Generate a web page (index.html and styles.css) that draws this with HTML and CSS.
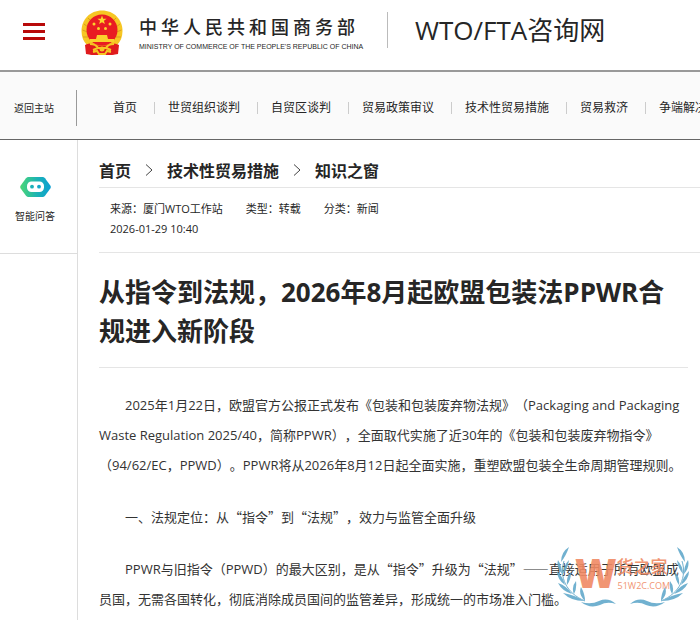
FILE: index.html
```html
<!DOCTYPE html>
<html lang="zh-CN">
<head>
<meta charset="utf-8">
<meta name="viewport" content="width=device-width, initial-scale=1">
<title>WTO/FTA咨询网</title>
<link rel="stylesheet" href="styles.css">
</head>
<body>
<header class="top">
  <button class="menu" type="button" aria-label="菜单"><span></span><span></span><span></span></button>
  <a class="brand" href="#">
    <svg class="emblem" viewBox="0 0 42 45" aria-hidden="true">
      <path d="M6 31 L36 31 L37 43 L30 45 H12 L5 43Z" fill="#e01b1d"/>
      <path d="M21 0.500C9 0.500 0.500 9.500 0.500 21c0 6 2 11 6 14.500h29c4-3.500 6-8.500 6-14.500C41.500 9.500 33 0.500 21 0.500z" fill="#f6c623"/>
      <path d="M3 14l4 3M1.500 20l5 2M2 27l5 0M39 14l-4 3M40.500 20l-5 2M40 27l-5 0M7 8l4 4M35 8l-4 4" stroke="#dc9c1c" fill="none"/>
      <circle cx="21" cy="20" r="15.500" fill="#e91c22"/>
      <path d="M21 5.500l1.200 3.200h3.400l-2.700 2.100 1 3.300L21 12.200l-2.900 1.900 1-3.300-2.700-2.100h3.400z" fill="#fbd82c"/>
      <g fill="#fbd02c"><circle cx="13" cy="14" r="1.500"/><circle cx="29" cy="14" r="1.500"/><circle cx="17.500" cy="18.500" r="1.500"/><circle cx="24.500" cy="18.500" r="1.500"/>
      <path d="M16 25h10l1 4h6v3H9v-3h6z"/></g>
      <path d="M4 35c5-2 10-2 13 1h8c3-3 8-3 13-1l-1 9-6 1H11l-6-1z" fill="#e01b1d"/>
      <path d="M9 34c4 0 7 2 8 4h8c1-2 4-4 8-4M12 42l4-1 2 3h6l2-3 4 1M17 38l-5 2M25 38l5 2" stroke="#f6c623" stroke-width="2" fill="none"/>
      <circle cx="21" cy="39" r="2.500" fill="#f6c623"/>
    </svg>
    <span class="ministry">
      <span class="ministry-cn">中华人民共和国商务部</span>
      <span class="ministry-en">MINISTRY OF COMMERCE OF THE PEOPLE'S REPUBLIC OF CHINA</span>
    </span>
  </a>
  <a class="site" href="#">WTO/FTA咨询网</a>
</header>

<nav class="nav">
  <a class="back" href="#">返回主站</a>
  <ul class="links">
    <li><a href="#">首页</a></li>
    <li><a href="#">世贸组织谈判</a></li>
    <li><a href="#">自贸区谈判</a></li>
    <li><a href="#">贸易政策审议</a></li>
    <li><a href="#">技术性贸易措施</a></li>
    <li><a href="#">贸易救济</a></li>
    <li><a href="#">争端解决</a></li>
  </ul>
</nav>

<div class="page">
  <aside class="side">
    <a class="ask" href="#">
      <svg class="bot" viewBox="0 0 31 20" aria-hidden="true">
        <defs><linearGradient id="g" x1="0" y1="0" x2="1" y2="0"><stop offset="0" stop-color="#4bd676"/><stop offset="0.550" stop-color="#1cb3b4"/><stop offset="1" stop-color="#0b9fd3"/></linearGradient></defs>
        <path d="M8.500 0h14q1.500 0 2.500 1.200l5.300 7.300q1 1.500 0 3L25 18.800Q24 20 22.500 20h-14Q7 20 6 18.800L0.700 11.500q-1-1.500 0-3L6 1.200Q7 0 8.500 0z" fill="url(#g)"/>
        <rect x="7" y="4.500" width="17" height="10.500" rx="4.500" fill="#fff"/>
        <circle cx="12" cy="9.700" r="1.900" fill="#19b0b9"/><circle cx="19" cy="9.700" r="1.900" fill="#11a6c8"/>
      </svg>
      <span>智能问答</span>
    </a>
  </aside>

  <main class="main">
    <nav class="crumbs">
      <a href="#">首页</a>
      <svg viewBox="0 0 8 14" aria-hidden="true"><path d="M1 1.500l6 5.500-6 5.500"/></svg>
      <a href="#">技术性贸易措施</a>
      <svg viewBox="0 0 8 14" aria-hidden="true"><path d="M1 1.500l6 5.500-6 5.500"/></svg>
      <a href="#">知识之窗</a>
    </nav>
    <div class="meta">
      <span>来源：厦门WTO工作站</span>
      <span>类型：转载</span>
      <span>分类：新闻</span>
      <time datetime="2026-01-29T10:40">2026-01-29 10:40</time>
    </div>
    <h1 class="title">从指令到法规，2026年8月起欧盟包装法PPWR合规进入新阶段</h1>
    <article class="body">
      <p>2025年1月22日，欧盟官方公报正式发布《包装和包装废弃物法规》（Packaging and Packaging Waste Regulation 2025/40，简称PPWR），全面取代实施了近30年的《包装和包装废弃物指令》（94/62/EC，PPWD）。PPWR将从2026年8月12日起全面实施，重塑欧盟包装全生命周期管理规则。</p>
      <p>一、法规定位：从<span class="cjk">“指令”</span>到<span class="cjk">“法规”</span>，效力与监管全面升级</p>
      <p>PPWR与旧指令（PPWD）的最大区别，是从<span class="cjk">“指令”</span>升级为<span class="cjk">“法规”——</span>直接适用于所有欧盟成员国，无需各国转化，彻底消除成员国间的监管差异，形成统一的市场准入门槛。</p>
    </article>
    <div class="mark">
      <svg class="laurel" viewBox="0 0 132 62" aria-hidden="true">
        <defs>
          <g id="half">
            <path d="M7 14C2 30 9 46 28 54"/>
            <path class="leaf" d="M12 0Q4 5 4 15Q9 9 12 0zM1 13Q-1 20 5 27Q5 19 1 13zM12 13Q6 19 6 27Q11 21 12 13zM0 24Q0 32 8 38Q6 30 0 24zM14 25Q9 30 10 38Q14 33 14 25zM1 36Q5 44 15 47Q10 39 1 36zM19 34Q14 40 17 47Q20 42 19 34zM6 46Q14 54 27 54Q18 48 6 46zM24 40Q21 47 28 54Q28 47 24 40z"/>
            <path class="leaf" d="M24 55Q34 58 42 54Q51 50 59 57Q50 54 43 58Q33 62 24 55z"/>
          </g>
        </defs>
        <use href="#half"/>
        <use href="#half" transform="translate(132 0) scale(-1 1)"/>
      </svg>
      <span class="mark-w">W</span>
      <span class="mark-text"><b>货之家</b><small>51W2C.COM</small></span>
    </div>
  </main>
</div>
</body>
</html>
```
FILE: styles.css
```css
* { box-sizing: border-box; }
body {
  margin: 0;
  overflow-x: hidden;
  background: #fff;
  color: #262626;
  font-family: "Open Sans", "Noto Sans CJK SC", sans-serif;
  text-spacing-trim: space-all;
}
a { color: inherit; text-decoration: none; }

.top {
  display: flex;
  align-items: center;
  height: 72px;
  padding: 0 0 10px 23px;
  border-bottom: 2px solid #999;
  white-space: nowrap;
}
.menu {
  display: flex;
  flex-direction: column;
  gap: 4px;
  width: 22px;
  padding: 2px 0 0;
  border: 0;
  background: none;
}
.menu span { height: 3px; background: #b80a0a; }
.brand {
  display: flex;
  align-items: center;
  gap: 16px;
  height: 36px;
  margin-left: 36px;
  padding-right: 29px;
  border-right: 1px solid #bbb;
}
.emblem { width: 42px; height: 45px; margin-top: 4px; }
.ministry { display: flex; flex-direction: column; width: 219px; padding-top: 6px; }
.ministry-cn {
  font-size: 18px;
  font-weight: 500;
  line-height: 28px;
  letter-spacing: 4px;
}
.ministry-en {
  font-family: "Liberation Sans", sans-serif;
  font-size: 7px;
  line-height: 12px;
}
.site { margin-left: 27px; font-size: 26px; line-height: 36px; }

.nav {
  display: flex;
  align-items: center;
  height: 68px;
  padding-top: 4px;
  border-bottom: 1px solid #666;
  background: #fafafa;
  white-space: nowrap;
}
.back {
  flex: none;
  width: 77px;
  padding-left: 14px;
  border-right: 1px solid #999;
  font-size: 10px;
  line-height: 36px;
}
.links {
  display: flex;
  margin: 0;
  padding: 0 0 0 36px;
  list-style: none;
  font-size: 12px;
  line-height: 18px;
}
.links li { display: flex; align-items: center; }
.links li + li::before {
  content: "";
  width: 1px;
  height: 12px;
  margin: 0 13px 0 17px;
  background: #ccc;
}

.page { display: flex; min-height: 480px; }
.side { flex: none; width: 78px; border-right: 1px solid #ddd; }
.ask {
  display: flex;
  flex-direction: column;
  align-items: center;
  gap: 11px;
  height: 114px;
  padding: 37px 7px 0 0;
  border-bottom: 1px solid #ddd;
  font-size: 10px;
  line-height: 16px;
}
.bot { width: 31px; height: 20px; }

.main { position: relative; flex: 1; min-width: 0; padding-left: 21px; }
.crumbs {
  display: flex;
  align-items: center;
  gap: 14px;
  height: 48px;
  padding-top: 13px;
  border-bottom: 1px solid #e5e5e5;
  font-size: 16px;
  font-weight: 700;
}
.crumbs svg { width: 8px; height: 14px; fill: none; stroke: #444; }
.meta {
  display: flex;
  flex-wrap: wrap;
  column-gap: 23px;
  padding: 11px 11px 13px;
  border-bottom: 1px solid #e5e5e5;
  font-size: 11px;
  line-height: 20px;
}
.meta time { flex-basis: 100%; }
.title {
  margin: 0 12px 0 0;
  padding: 20px 0 16px;
  border-bottom: 1px solid #e5e5e5;
  font-size: 26px;
  line-height: 39px;
}
.body { padding: 22px 12px 0 0; font-size: 13px; line-height: 30px; color: #333; }
.body p { margin: 0 0 22px; text-indent: 2em; }
.cjk { font-family: "Noto Sans CJK SC", sans-serif; }

.mark {
  position: absolute;
  right: 11px;
  top: 407px;
  display: flex;
  width: 132px;
  height: 62px;
  padding: 6px 0 0 18px;
  color: #f08a64;
  opacity: 0.9;
}
.laurel { position: absolute; inset: 0; width: 132px; height: 62px; fill: none; stroke: #62a9cb; }
.laurel .leaf { fill: #62a9cb; stroke: none; }
.mark-w { font-size: 40px; font-weight: 800; line-height: 40px; }
.mark-text { display: flex; flex-direction: column; }
.mark-text b { font-size: 17px; font-weight: 500; line-height: 28px; }
.mark-text small { padding-left: 1px; font-size: 9px; line-height: 10px; }
```
